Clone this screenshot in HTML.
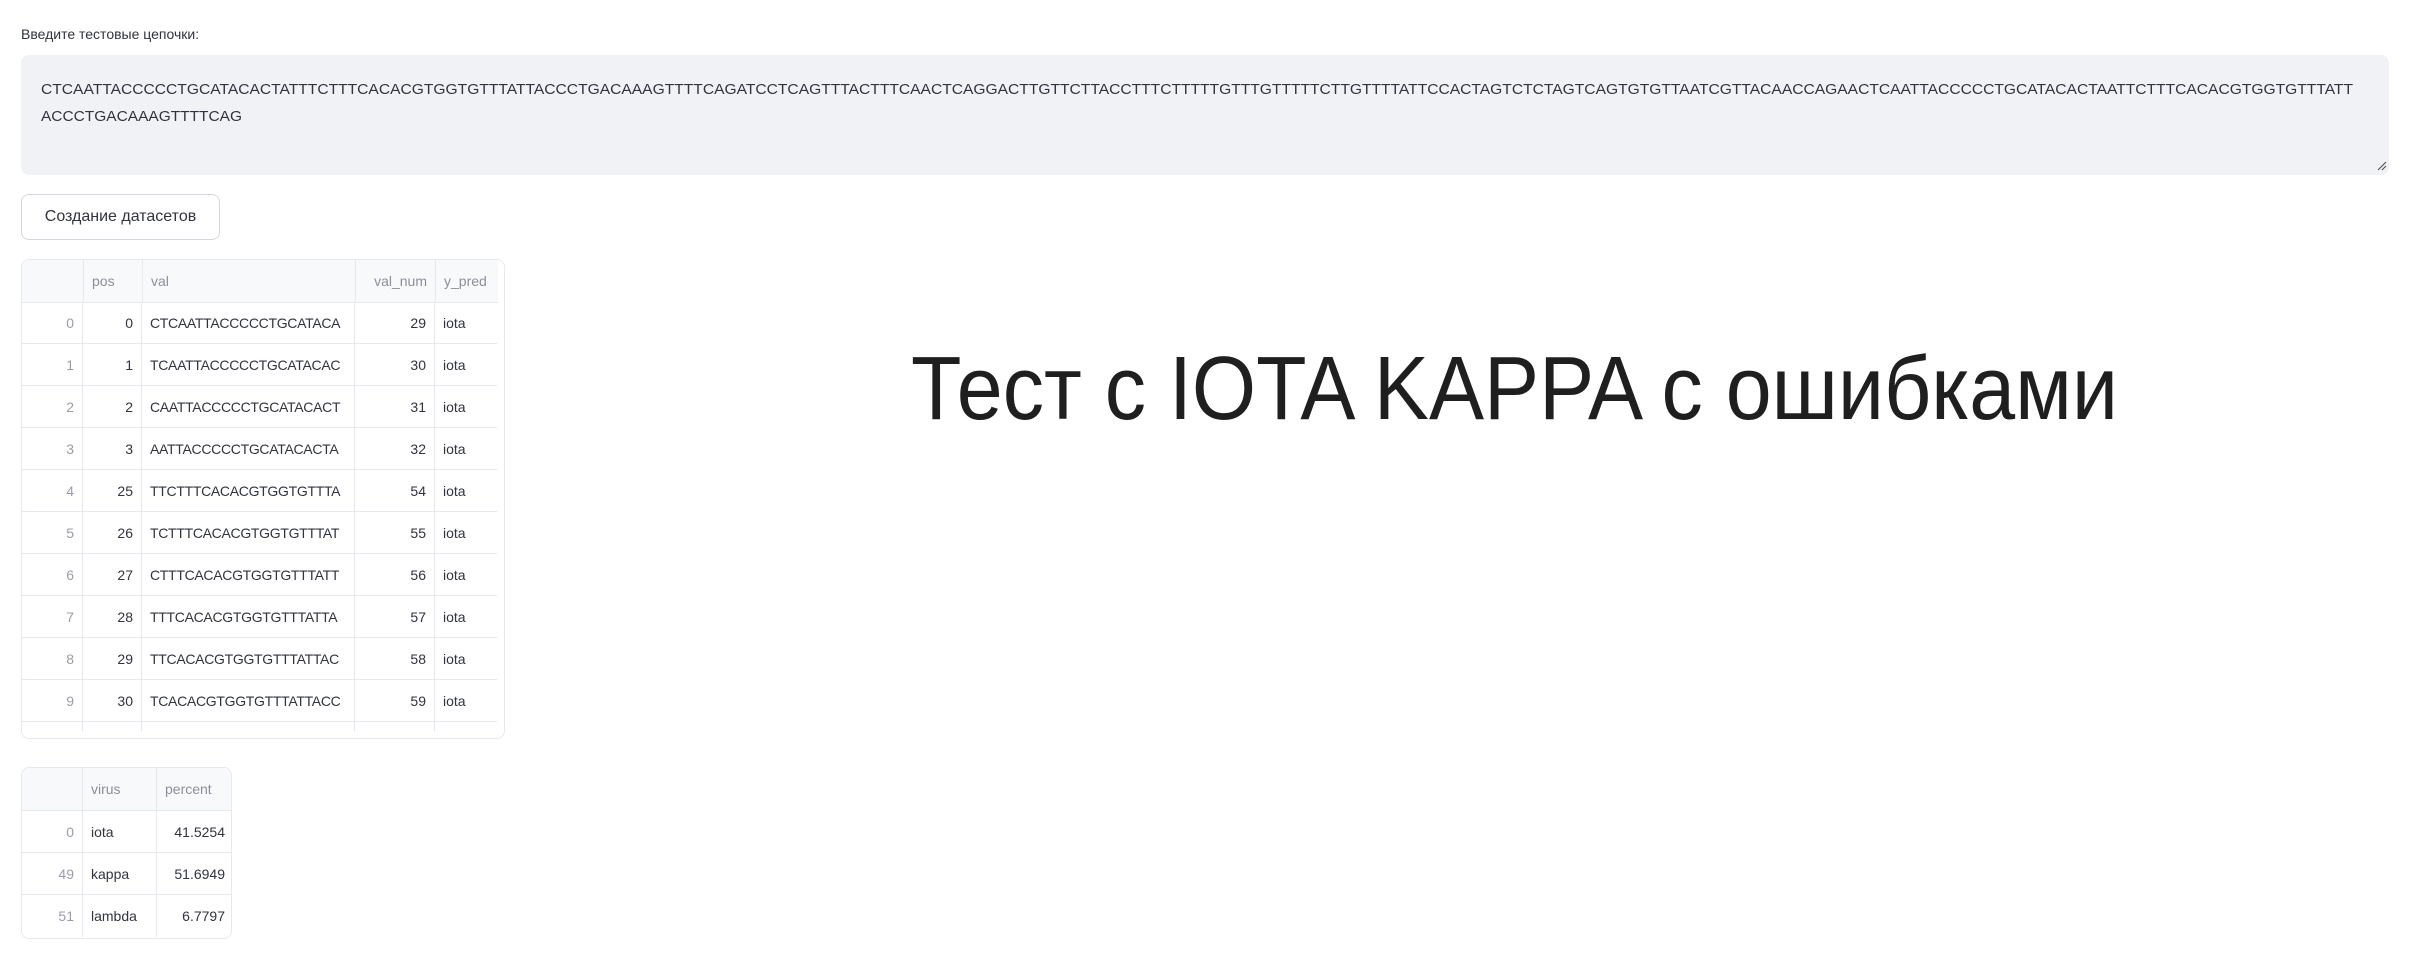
<!DOCTYPE html>
<html><head><meta charset="utf-8"><style>
*{margin:0;padding:0;box-sizing:border-box}
body{width:2417px;height:969px;background:#fff;position:relative;overflow:hidden;font-family:"Liberation Sans",sans-serif;color:#31333f}
.abs{position:absolute}
.lbl{left:21px;top:26px;font-size:14px;color:#31333f}
.ta{left:21px;top:55px;width:2368px;height:120px;background:#f0f2f6;border-radius:8px}
.btn{left:21px;top:194px;width:199px;height:46px;border:1px solid #d5d7de;border-radius:8px;font-size:16px;display:flex;align-items:center;justify-content:center;color:#31333f}
.tbl{border:1px solid #e6e9ef;border-radius:8px;overflow:hidden;background:#fff}
.row{position:absolute;left:0;height:42px;border-bottom:1px solid #e6e9ef}
.c{position:absolute;top:0;height:42px;line-height:42px;font-size:14px;border-right:1px solid #e6e9ef;padding:0 8px;white-space:nowrap;overflow:hidden}
.h{color:#8b8f9a;background:#f8f9fb}
.i{color:#9a9da6;text-align:right}
.r{text-align:right}
.v{font-size:14px;letter-spacing:-0.3px}
</style></head><body>
<div class="abs lbl">Введите тестовые цепочки:</div>
<div class="abs ta"></div>
<svg class="abs" style="left:0;top:0" width="2417" height="200">
<text x="41" y="94" font-family="Liberation Sans" font-size="15" fill="#31333f" textLength="2312" lengthAdjust="spacingAndGlyphs">CTCAATTACCCCCTGCATACACTATTTCTTTCACACGTGGTGTTTATTACCCTGACAAAGTTTTCAGATCCTCAGTTTACTTTCAACTCAGGACTTGTTCTTACCTTTCTTTTTGTTTGTTTTTCTTGTTTTATTCCACTAGTCTCTAGTCAGTGTGTTAATCGTTACAACCAGAACTCAATTACCCCCTGCATACACTAATTCTTTCACACGTGGTGTTTATT</text>
<text x="41" y="121" font-family="Liberation Sans" font-size="15" fill="#31333f" textLength="201" lengthAdjust="spacingAndGlyphs">ACCCTGACAAAGTTTTCAG</text>
<path d="M2378 170 L2386 162 M2382 170 L2386 166" stroke="#555" stroke-width="1.2"/>
</svg>
<div class="abs btn">Создание датасетов</div>

<div class="abs tbl" style="left:21px;top:259px;width:484px;height:480px">
<div class="row h" style="top:0;width:476px;height:43px">
<div class="c" style="left:0;width:62px"></div>
<div class="c" style="left:62px;width:59px;color:#8b8f9a">pos</div>
<div class="c" style="left:121px;width:213px;color:#8b8f9a">val</div>
<div class="c r" style="left:334px;width:80px;color:#8b8f9a">val_num</div>
<div class="c" style="left:414px;width:62px;color:#8b8f9a;border-right:none">y_pred</div>
</div>
</div>

<div class="abs tbl" style="left:21px;top:767px;width:211px;height:172px">
<div class="row h" style="top:0;width:211px;height:43px">
<div class="c" style="left:0;width:61px"></div>
<div class="c" style="left:61px;width:74px;color:#8b8f9a">virus</div>
<div class="c" style="left:135px;width:76px;color:#8b8f9a;border-right:none">percent</div>
</div>
<div class="row" style="top:43px;width:211px"><div class="c i" style="left:0;width:61px">0</div><div class="c" style="left:61px;width:74px">iota</div><div class="c r" style="left:135px;width:76px;border-right:none">41.5254</div></div>
<div class="row" style="top:85px;width:211px"><div class="c i" style="left:0;width:61px">49</div><div class="c" style="left:61px;width:74px">kappa</div><div class="c r" style="left:135px;width:76px;border-right:none">51.6949</div></div>
<div class="row" style="top:127px;width:211px;border-bottom:none"><div class="c i" style="left:0;width:61px">51</div><div class="c" style="left:61px;width:74px">lambda</div><div class="c r" style="left:135px;width:76px;border-right:none">6.7797</div></div>
</div>

<svg class="abs" style="left:0;top:0" width="2417" height="969">
<text x="911" y="419" font-family="Liberation Sans" font-size="90" fill="#1f1f1f" textLength="1207" lengthAdjust="spacingAndGlyphs">Тест с IOTA KAPPA с ошибками</text>
</svg>

<div class="abs" style="left:21px;top:302px;width:476px;height:430px;overflow:hidden">
<div class="row" style="top:0;width:476px"><div class="c i" style="left:0;width:62px">0</div><div class="c r" style="left:62px;width:59px">0</div><div class="c v" style="left:121px;width:213px">CTCAATTACCCCCTGCATACA</div><div class="c r" style="left:334px;width:80px">29</div><div class="c" style="left:414px;width:62px;border-right:none">iota</div></div>
<div class="row" style="top:42px;width:476px"><div class="c i" style="left:0;width:62px">1</div><div class="c r" style="left:62px;width:59px">1</div><div class="c v" style="left:121px;width:213px">TCAATTACCCCCTGCATACAC</div><div class="c r" style="left:334px;width:80px">30</div><div class="c" style="left:414px;width:62px;border-right:none">iota</div></div>
<div class="row" style="top:84px;width:476px"><div class="c i" style="left:0;width:62px">2</div><div class="c r" style="left:62px;width:59px">2</div><div class="c v" style="left:121px;width:213px">CAATTACCCCCTGCATACACT</div><div class="c r" style="left:334px;width:80px">31</div><div class="c" style="left:414px;width:62px;border-right:none">iota</div></div>
<div class="row" style="top:126px;width:476px"><div class="c i" style="left:0;width:62px">3</div><div class="c r" style="left:62px;width:59px">3</div><div class="c v" style="left:121px;width:213px">AATTACCCCCTGCATACACTA</div><div class="c r" style="left:334px;width:80px">32</div><div class="c" style="left:414px;width:62px;border-right:none">iota</div></div>
<div class="row" style="top:168px;width:476px"><div class="c i" style="left:0;width:62px">4</div><div class="c r" style="left:62px;width:59px">25</div><div class="c v" style="left:121px;width:213px">TTCTTTCACACGTGGTGTTTA</div><div class="c r" style="left:334px;width:80px">54</div><div class="c" style="left:414px;width:62px;border-right:none">iota</div></div>
<div class="row" style="top:210px;width:476px"><div class="c i" style="left:0;width:62px">5</div><div class="c r" style="left:62px;width:59px">26</div><div class="c v" style="left:121px;width:213px">TCTTTCACACGTGGTGTTTAT</div><div class="c r" style="left:334px;width:80px">55</div><div class="c" style="left:414px;width:62px;border-right:none">iota</div></div>
<div class="row" style="top:252px;width:476px"><div class="c i" style="left:0;width:62px">6</div><div class="c r" style="left:62px;width:59px">27</div><div class="c v" style="left:121px;width:213px">CTTTCACACGTGGTGTTTATT</div><div class="c r" style="left:334px;width:80px">56</div><div class="c" style="left:414px;width:62px;border-right:none">iota</div></div>
<div class="row" style="top:294px;width:476px"><div class="c i" style="left:0;width:62px">7</div><div class="c r" style="left:62px;width:59px">28</div><div class="c v" style="left:121px;width:213px">TTTCACACGTGGTGTTTATTA</div><div class="c r" style="left:334px;width:80px">57</div><div class="c" style="left:414px;width:62px;border-right:none">iota</div></div>
<div class="row" style="top:336px;width:476px"><div class="c i" style="left:0;width:62px">8</div><div class="c r" style="left:62px;width:59px">29</div><div class="c v" style="left:121px;width:213px">TTCACACGTGGTGTTTATTAC</div><div class="c r" style="left:334px;width:80px">58</div><div class="c" style="left:414px;width:62px;border-right:none">iota</div></div>
<div class="row" style="top:378px;width:476px"><div class="c i" style="left:0;width:62px">9</div><div class="c r" style="left:62px;width:59px">30</div><div class="c v" style="left:121px;width:213px">TCACACGTGGTGTTTATTACC</div><div class="c r" style="left:334px;width:80px">59</div><div class="c" style="left:414px;width:62px;border-right:none">iota</div></div>
<div class="row" style="top:420px;width:476px"><div class="c" style="left:0;width:62px"></div><div class="c" style="left:62px;width:59px"></div><div class="c" style="left:121px;width:213px"></div><div class="c" style="left:334px;width:80px"></div></div>
</div>
</body></html>
